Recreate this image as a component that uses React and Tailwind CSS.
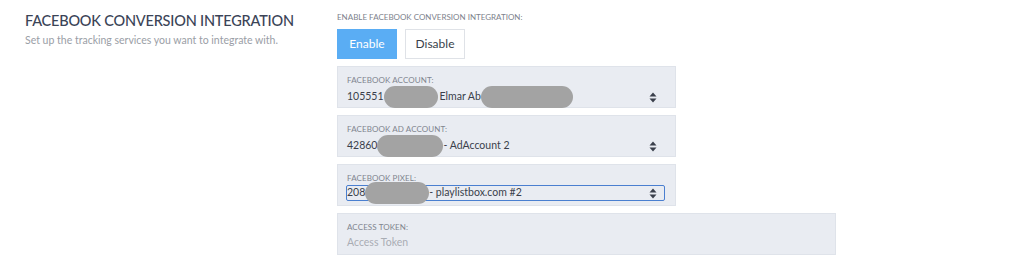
function Blob({ w }) {
  return <span className={`inline-block h-[22px] rounded-full bg-[#a3a3a3] ${w}`}></span>;
}

function SortIcon() {
  return (
    <svg width="8" height="11" viewBox="0 0 8 11" className="shrink-0">
      <path d="M4 0.5 L7.5 4.5 H0.5 Z" fill="#3a3f4b" />
      <path d="M4 10.5 L7.5 6.5 H0.5 Z" fill="#3a3f4b" />
    </svg>
  );
}

function Panel({ label, children, wide }) {
  return (
    <div
      className={`h-[42px] border border-[#dfe3ea] bg-[#e9ecf2] pl-[9px] pr-[18px] pt-[8px] ${
        wide ? "w-[499px]" : "w-[339px]"
      }`}
    >
      <div className="text-[8px] leading-[10px] tracking-[0.1px] text-[#80858f]">{label}</div>
      {children}
    </div>
  );
}

export default function App() {
  return (
    <div
      className="flex h-[272px] w-[1024px] bg-white"
      style={{ fontFamily: "Lato, 'Noto Sans', Arial, sans-serif" }}
    >
      <div className="w-[312px] pl-[25px] pt-[12px]">
        <h1 className="whitespace-nowrap text-[14.5px] leading-[18px] font-medium tracking-[-0.2px] text-[#3b4457]">
          FACEBOOK CONVERSION INTEGRATION
        </h1>
        <p className="mt-[4px] whitespace-nowrap text-[10.5px] leading-[13px] text-[#9a9ea6]">
          Set up the tracking services you want to integrate with.
        </p>
      </div>

      <div className="flex flex-col pl-[25px] pt-[12px]">
        <div className="text-[8px] leading-[10px] text-[#7d828c]">
          ENABLE FACEBOOK CONVERSION INTEGRATION:
        </div>
        <div className="mt-[7px] flex gap-[8px]">
          <button className="h-[30px] w-[60px] bg-[#5aadf4] text-[12px] text-white">Enable</button>
          <button className="h-[30px] w-[60px] border border-[#dfe2e7] bg-white text-[12px] text-[#3a3f4b]">
            Disable
          </button>
        </div>

        <div className="mt-[7px] flex flex-col gap-[7px]">
          <Panel label="FACEBOOK ACCOUNT:">
            <div className="mt-[1px] flex h-[22px] items-center text-[10.5px] text-[#3a3f4b]">
              <span>105551</span>
              <Blob w="w-[54px]" />
              <span className="ml-[2px]">Elmar Ab</span>
              <Blob w="w-[92px]" />
              <span className="flex-1"></span>
              <SortIcon />
            </div>
          </Panel>

          <Panel label="FACEBOOK AD ACCOUNT:">
            <div className="mt-[1px] flex h-[22px] items-center text-[10.5px] text-[#3a3f4b]">
              <span>42860</span>
              <Blob w="w-[66px]" />
              <span>- AdAccount 2</span>
              <span className="flex-1"></span>
              <SortIcon />
            </div>
          </Panel>

          <Panel label="FACEBOOK PIXEL:">
            <div className="mt-[2px] -ml-[1px] mr-[-8px] flex h-[16px] items-center rounded-[2px] border border-[#4a7fd0] pr-[7px] text-[10.5px] text-[#3a3f4b]">
              <span>208</span>
              <Blob w="w-[64px]" />
              <span>- playlistbox.com #2</span>
              <span className="flex-1"></span>
              <SortIcon />
            </div>
          </Panel>

          <Panel label="ACCESS TOKEN:" wide>
            <div className="mt-[3px] text-[10.5px] leading-[14px] text-[#a9adb4]">Access Token</div>
          </Panel>
        </div>
      </div>
    </div>
  );
}
